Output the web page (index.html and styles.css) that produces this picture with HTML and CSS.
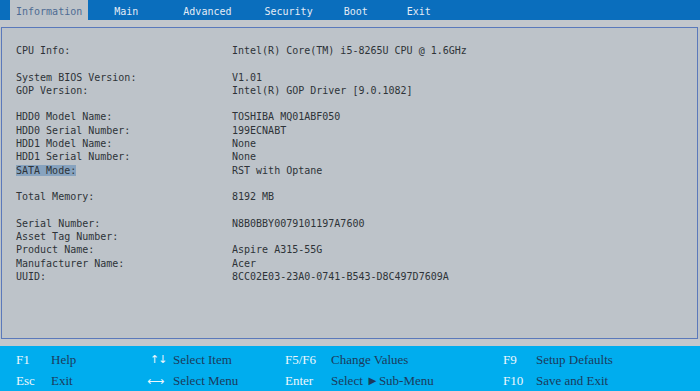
FILE: index.html
```html
<!DOCTYPE html>
<html lang="en">
<head>
    <meta charset="UTF-8">
    <title>BIOS Setup - Information</title>
    <link rel="stylesheet" href="styles.css">
</head>
<body>
    <div class="screen">
        <!-- Menu tabs -->
        <div class="menubar">
            <div class="tab active">Information</div>
            <div class="tab tab-main">Main</div>
            <div class="tab tab-adv">Advanced</div>
            <div class="tab tab-sec">Security</div>
            <div class="tab tab-boot">Boot</div>
            <div class="tab tab-exit">Exit</div>
        </div>
        <div class="strip"></div>

        <!-- Info panel -->
        <div class="panel">
            <div class="row"><span class="label">CPU Info:</span><span class="value">Intel(R) Core(TM) i5-8265U CPU @ 1.6GHz</span></div>
            <div class="row blank"></div>
            <div class="row"><span class="label">System BIOS Version:</span><span class="value">V1.01</span></div>
            <div class="row"><span class="label">GOP Version:</span><span class="value">Intel(R) GOP Driver [9.0.1082]</span></div>
            <div class="row blank"></div>
            <div class="row"><span class="label">HDD0 Model Name:</span><span class="value">TOSHIBA MQ01ABF050</span></div>
            <div class="row"><span class="label">HDD0 Serial Number:</span><span class="value">199ECNABT</span></div>
            <div class="row"><span class="label">HDD1 Model Name:</span><span class="value">None</span></div>
            <div class="row"><span class="label">HDD1 Serial Number:</span><span class="value">None</span></div>
            <div class="row"><span class="label"><span class="selected">SATA Mode:</span></span><span class="value">RST with Optane</span></div>
            <div class="row blank"></div>
            <div class="row"><span class="label">Total Memory:</span><span class="value">8192 MB</span></div>
            <div class="row blank"></div>
            <div class="row"><span class="label">Serial Number:</span><span class="value">N8B0BBY0079101197A7600</span></div>
            <div class="row"><span class="label">Asset Tag Number:</span><span class="value"></span></div>
            <div class="row"><span class="label">Product Name:</span><span class="value">Aspire A315-55G</span></div>
            <div class="row"><span class="label">Manufacturer Name:</span><span class="value">Acer</span></div>
            <div class="row"><span class="label">UUID:</span><span class="value">8CC02E03-23A0-0741-B543-D8C497D7609A</span></div>
        </div>
        <div class="strip"></div>

        <!-- Key help -->
        <div class="keys">
            <span class="key">F1</span><span class="desc">Help</span>
            <span class="key arrows">&#8593;&#8595;</span><span class="desc">Select Item</span>
            <span class="key">F5/F6</span><span class="desc">Change Values</span>
            <span class="key">F9</span><span class="desc">Setup Defaults</span>

            <span class="key">Esc</span><span class="desc">Exit</span>
            <span class="key arrows lr">&#10231;</span><span class="desc">Select Menu</span>
            <span class="key">Enter</span><span class="desc">Select &#9658;Sub-Menu</span>
            <span class="key">F10</span><span class="desc">Save and Exit</span>
        </div>
    </div>
</body>
</html>
```

FILE: styles.css
```css
html, body {
    margin: 0;
    padding: 0;
}
body {
    background-color: #bdc3c9;
}
.screen {
    width: 700px;
    height: 391px;
    display: flex;
    flex-direction: column;
    overflow: hidden;
}
.menubar {
    height: 20px;
    background-color: #0a6ebd;
    display: flex;
    align-items: stretch;
    font-family: "DejaVu Sans Mono", monospace;
    font-size: 10px;
    color: #e4ecf6;
}
.tab {
    display: flex;
    align-items: center;
    padding-top: 2px;
}
.tab.active {
    margin-left: 10px;
    padding: 2px 6px 0 6px;
    background-color: #bdc3c9;
    color: #4d6b93;
}
.tab-main { margin-left: 26px; }
.tab-adv { margin-left: 45px; }
.tab-sec { margin-left: 33px; }
.tab-boot { margin-left: 31px; }
.tab-exit { margin-left: 39px; }
.strip {
    height: 7px;
    background-color: #c3c7cc;
}
.panel {
    height: 312px;
    margin: 0 2px 0 1px;
    border: 1px solid #5b79bb;
    background-color: #bdc3c9;
    box-sizing: border-box;
    padding: 16px 0 0 14px;
    font-family: "DejaVu Sans Mono", monospace;
    font-size: 10px;
    line-height: 13.3px;
    color: #2e3338;
}
.row {
    display: flex;
    height: 13.3px;
    white-space: pre;
}
.label {
    width: 216px;
}
.selected {
    background-color: #87a3bf;
}
.keys {
    flex: 1;
    background-color: #00adee;
    display: grid;
    grid-template-columns: 35px 99px 23px 112px 46px 172px 33px 1fr;
    grid-auto-rows: 21px;
    align-items: center;
    padding: 3px 0 0 16px;
    font-family: "Liberation Serif", serif;
    font-size: 13px;
    color: #1c3b5c;
}
.key {
    color: #eef7fc;
}
.arrows {
    font-family: "DejaVu Sans", sans-serif;
    font-size: 11px;
    letter-spacing: -1px;
}
.arrows.lr {
    margin-left: -3px;
    font-size: 12px;
    letter-spacing: 0;
}
```
